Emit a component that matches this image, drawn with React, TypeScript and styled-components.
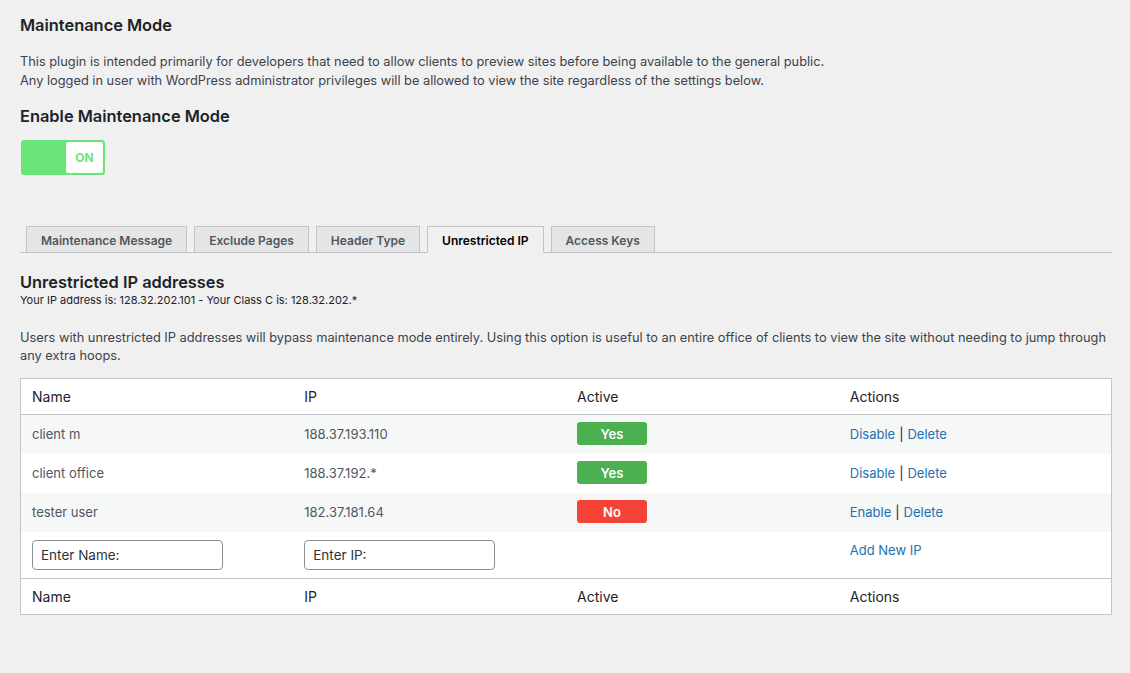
import React from "react";
import styled, { createGlobalStyle } from "styled-components";

const Global = createGlobalStyle`
  html, body { margin: 0; padding: 0; background: #f0f0f1; }
  body {
    font-family: Inter, "Noto Sans", "Liberation Sans", sans-serif;
    color: #3c434a;
    -webkit-font-smoothing: antialiased;
  }
  #root { min-height: 673px; }
`;

const Page = styled.div`
  padding: 14px 18px 40px 20px;
`;

const Heading = styled.h2<{ $gap?: number }>`
  margin: ${(p) => p.$gap ?? 0}px 0 0;
  font-size: 16.4px;
  line-height: 22px;
  font-weight: 600;
  color: #1d2327;
`;

const Text = styled.p<{ $gap: number; $lh: number }>`
  margin: ${(p) => p.$gap}px 0 0;
  font-size: 12.8px;
  line-height: ${(p) => p.$lh}px;
  color: #3c434a;
`;

const Small = styled.div`
  font-size: 11px;
  line-height: 14px;
  color: #1d2327;
`;

const Toggle = styled.div`
  margin: 13px 0 0 1px;
  width: 84px;
  height: 35px;
  box-sizing: border-box;
  background: #6ae579;
  border-radius: 3px;
  padding: 2px;
  display: flex;
  justify-content: flex-end;
`;

const Knob = styled.span`
  width: 37px;
  height: 31px;
  background: #fff;
  border-radius: 2px;
  display: flex;
  align-items: center;
  justify-content: center;
  font-size: 12px;
  font-weight: 700;
  color: #6ae579;
`;

const Tabs = styled.nav`
  margin-top: 51px;
  display: flex;
  align-items: flex-end;
  gap: 7px;
  padding-left: 6px;
  border-bottom: 1px solid #c3c4c7;
  height: 26px;
`;

const Tab = styled.span<{ $active?: boolean }>`
  box-sizing: border-box;
  height: 27px;
  margin-bottom: -1px;
  padding: 1px 14px 0;
  display: flex;
  align-items: center;
  font-size: 12px;
  font-weight: 600;
  border: 1px solid #c3c4c7;
  border-bottom-color: ${(p) => (p.$active ? "#f0f0f1" : "#c3c4c7")};
  background: ${(p) => (p.$active ? "#f0f0f1" : "#e5e5e5")};
  color: ${(p) => (p.$active ? "#000" : "#50575e")};
`;

const Table = styled.table`
  margin-top: 13px;
  width: 100%;
  border-collapse: collapse;
  table-layout: fixed;
  background: #fff;
  border: 1px solid #c3c4c7;
  font-size: 13px;
`;

const HeadCell = styled.th`
  text-align: left;
  font-weight: 400;
  font-size: 14px;
  color: #1d2327;
  height: 35px;
  padding: 0 11px;
`;

const HeadRow = styled.tr<{ $foot?: boolean }>`
  border-${(p) => (p.$foot ? "top" : "bottom")}: 1px solid #c3c4c7;
`;

const Row = styled.tr<{ $alt?: boolean }>`
  background: ${(p) => (p.$alt ? "#f6f7f7" : "#fff")};
`;

const Cell = styled.td`
  height: 37px;
  padding: 0 11px 2px;
  color: #50575e;
  vertical-align: middle;
`;

const InputCell = styled.td<{ $top?: boolean }>`
  height: ${(p) => (p.$top ? 36 : 46)}px;
  padding: ${(p) => (p.$top ? "10px" : "0")} 11px 0;
  vertical-align: ${(p) => (p.$top ? "top" : "middle")};
  color: #50575e;
`;

const Badge = styled.span<{ $on: boolean }>`
  display: inline-flex;
  align-items: center;
  justify-content: center;
  width: 70px;
  height: 23px;
  border-radius: 3px;
  background: ${(p) => (p.$on ? "#4caf50" : "#f44336")};
  color: #fff;
  font-weight: 600;
  font-size: 13px;
`;

const Link = styled.a`
  color: #2271b1;
  text-decoration: none;
`;

const Sep = styled.span`
  color: #1d2327;
  margin: 0 4px;
`;

const Field = styled.input`
  box-sizing: border-box;
  width: 191px;
  height: 30px;
  border: 1px solid #8c8f94;
  border-radius: 4px;
  padding: 0 8px;
  font: inherit;
  font-size: 13.5px;
  color: #2c3338;
  background: #fff;
  &::placeholder { color: #2c3338; opacity: 1; }
`;

type Entry = { name: string; ip: string; active: boolean };

const entries: Entry[] = [
  { name: "client m", ip: "188.37.193.110", active: true },
  { name: "client office", ip: "188.37.192.*", active: true },
  { name: "tester user", ip: "182.37.181.64", active: false },
];

const HeaderCells = () => (
  <>
    <HeadCell>Name</HeadCell>
    <HeadCell>IP</HeadCell>
    <HeadCell>Active</HeadCell>
    <HeadCell>Actions</HeadCell>
  </>
);

export default function App() {
  return (
    <Page>
      <Global />
      <Heading>Maintenance Mode</Heading>
      <Text $gap={16} $lh={19}>
        This plugin is intended primarily for developers that need to allow clients to preview sites before being available to the general public.
        <br />
        Any logged in user with WordPress administrator privileges will be allowed to view the site regardless of the settings below.
      </Text>
      <Heading $gap={15}>Enable Maintenance Mode</Heading>
      <Toggle>
        <Knob>ON</Knob>
      </Toggle>

      <Tabs>
        <Tab>Maintenance Message</Tab>
        <Tab>Exclude Pages</Tab>
        <Tab>Header Type</Tab>
        <Tab $active>Unrestricted IP</Tab>
        <Tab>Access Keys</Tab>
      </Tabs>

      <Heading $gap={18}>Unrestricted IP addresses</Heading>
      <Small>Your IP address is: 128.32.202.101 - Your Class C is: 128.32.202.*</Small>
      <Text $gap={22} $lh={18}>
        Users with unrestricted IP addresses will bypass maintenance mode entirely. Using this option is useful to an entire office of clients to view the site without needing to jump through any extra hoops.
      </Text>

      <Table>
        <thead>
          <HeadRow>
            <HeaderCells />
          </HeadRow>
        </thead>
        <tbody>
          {entries.map((e, i) => (
            <Row key={e.name} $alt={i % 2 === 0}>
              <Cell>{e.name}</Cell>
              <Cell>{e.ip}</Cell>
              <Cell>
                <Badge $on={e.active}>{e.active ? "Yes" : "No"}</Badge>
              </Cell>
              <Cell>
                <Link href="#">{e.active ? "Disable" : "Enable"}</Link>
                <Sep>|</Sep>
                <Link href="#">Delete</Link>
              </Cell>
            </Row>
          ))}
          <Row>
            <InputCell>
              <Field placeholder="Enter Name:" />
            </InputCell>
            <InputCell>
              <Field placeholder="Enter IP:" />
            </InputCell>
            <InputCell />
            <InputCell $top>
              <Link href="#">Add New IP</Link>
            </InputCell>
          </Row>
        </tbody>
        <tfoot>
          <HeadRow $foot>
            <HeaderCells />
          </HeadRow>
        </tfoot>
      </Table>
    </Page>
  );
}
